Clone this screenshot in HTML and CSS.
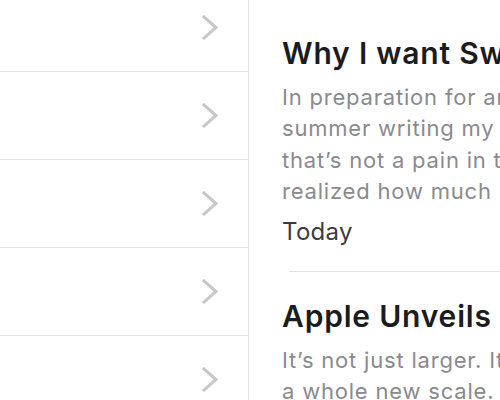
FILE: index.html
```html
<!DOCTYPE html>
<html>
<head>
<meta charset="utf-8">
<link rel="stylesheet" href="styles.css">
</head>
<body>
<div class="app">
  <nav class="sidebar">
    <ul class="list">
      <li class="row"><svg class="chev" viewBox="0 0 16 25" width="16" height="25"><polyline points="2,2 14,12.5 2,23"/></svg></li>
      <li class="row"><svg class="chev" viewBox="0 0 16 25" width="16" height="25"><polyline points="2,2 14,12.5 2,23"/></svg></li>
      <li class="row"><svg class="chev" viewBox="0 0 16 25" width="16" height="25"><polyline points="2,2 14,12.5 2,23"/></svg></li>
      <li class="row"><svg class="chev" viewBox="0 0 16 25" width="16" height="25"><polyline points="2,2 14,12.5 2,23"/></svg></li>
      <li class="row"><svg class="chev" viewBox="0 0 16 25" width="16" height="25"><polyline points="2,2 14,12.5 2,23"/></svg></li>
    </ul>
  </nav>
  <main class="content">
    <article class="post">
      <h2 class="title">Why I want Swift on the server</h2>
      <p class="excerpt">In preparation for an upcoming project, I spent the<br>summer writing my own web framework, one<br>that’s not a pain in the neck to work with, and<br>realized how much I missed a typed language.</p>
      <div class="date">Today</div>
    </article>
    <article class="post second">
      <h2 class="title">Apple Unveils iPad Pro</h2>
      <p class="excerpt">It’s not just larger. It’s a whole new way of working on<br>a whole new scale.</p>
      <div class="date">Yesterday</div>
    </article>
  </main>
</div>
</body>
</html>
```
FILE: styles.css
```css
html, body {
  margin: 0;
  padding: 0;
  background: #ffffff;
  overflow: hidden;
  height: 100%;
}
body {
  font-family: Inter, "Noto Sans", sans-serif;
}
.app {
  display: flex;
  height: 400px;
  width: 900px;
}
.sidebar {
  width: 248px;
  flex: none;
  border-right: 1px solid #e3e3e6;
  overflow: hidden;
}
.list {
  list-style: none;
  margin: -16px 0 0 0;
  padding: 0;
}
.row {
  height: 87px;
  border-bottom: 1px solid #e3e3e6;
  display: flex;
  align-items: center;
  justify-content: flex-end;
  padding-right: 30px;
}
.chev polyline {
  fill: none;
  stroke: #c7c7cc;
  stroke-width: 3;
  stroke-linecap: square;
  stroke-linejoin: miter;
}
.content {
  flex: 1;
  padding-left: 34px;
  white-space: nowrap;
}
.post {
  padding-top: 33px;
  padding-bottom: 22px;
  border-bottom: 1px solid #e3e3e6;
  margin-left: 6px;
}
.post .title, .post .excerpt, .post .date {
  margin-left: -7px;
}
.second {
  border-bottom: none;
  padding-top: 24px;
}
.title {
  margin: 0;
  font-size: 30px;
  line-height: 40px;
  font-weight: 600;
  color: #1c1c1e;
  letter-spacing: 0.8px;
}
.excerpt {
  margin: 9px 0 0 0;
  font-size: 22px;
  line-height: 31.4px;
  color: #8a8a8e;
  letter-spacing: 0.8px;
}
.date {
  margin-top: 7px;
  font-size: 24px;
  line-height: 34px;
  color: #3c3c3e;
  letter-spacing: 0.3px;
}
```
